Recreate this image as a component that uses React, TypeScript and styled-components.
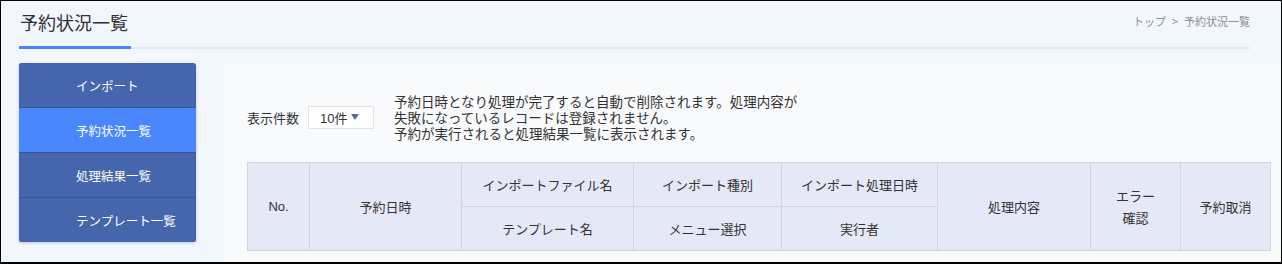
import styled, { createGlobalStyle } from 'styled-components'

const GlobalStyle = createGlobalStyle`
  html, body {
    margin: 0;
    padding: 0;
    background: #ffffff;
  }
  body {
    font-family: 'Noto Sans CJK JP', 'Liberation Sans', sans-serif;
    color: #333;
  }
`

const Frame = styled.div`
  box-sizing: border-box;
  width: 1282px;
  height: 264px;
  overflow: hidden;
  border: 1px solid #000;
  border-bottom-width: 2px;
  background: #f2f6fd;
`

const Header = styled.header`
  display: flex;
  justify-content: space-between;
  align-items: flex-start;
  margin: 0 31px 0 18px;
  border-bottom: 2px solid #e3e9f3;
`

const Title = styled.h1`
  margin: 0 0 -2px;
  padding: 8px 3px 11px 1px;
  font-size: 18px;
  line-height: 26px;
  font-weight: 400;
  color: #2f3033;
  border-bottom: 3px solid #4a86f6;
`

const Breadcrumb = styled.nav`
  padding-top: 13px;
  font-size: 11px;
  line-height: 14px;
  color: #8c9099;

  span {
    margin: 0 6px;
  }
`

const Body = styled.div`
  display: flex;
  align-items: flex-start;
  margin-top: 14px;
  padding-left: 18px;
`

const Sidebar = styled.ul`
  list-style: none;
  margin: 0;
  padding: 0;
  width: 177px;
  flex: none;
  border-radius: 2px 3px 2px 2px;
  overflow: hidden;
  box-shadow: 0 1px 3px rgba(40, 60, 110, 0.25);
`

const NavItem = styled.li<{ $active?: boolean }>`
  height: 44px;
  padding-left: 57px;
  display: flex;
  align-items: center;
  font-size: 12.5px;
  color: #ffffff;
  background: ${({ $active }) => ($active ? '#4a87fc' : '#4566ad')};
  & + & {
    border-top: 1px solid #3a5591;
  }
`

const Card = styled.main`
  flex: 1;
  margin: 1px 0 0 28px;
  height: 210px;
  padding: 29px 11px 0 23px;
  background: #f9fafc;
`

const Controls = styled.div`
  display: flex;
  align-items: center;
`

const Label = styled.span`
  font-size: 13px;
  color: #333;
`

const Select = styled.div`
  box-sizing: border-box;
  display: flex;
  align-items: center;
  justify-content: space-between;
  width: 66px;
  height: 23px;
  margin-left: 9px;
  padding: 0 14px 0 11px;
  background: #fff;
  border: 1px solid #e1e4ea;
  font-size: 13px;
  color: #333;
  font-family: 'Liberation Sans', 'Noto Sans CJK JP', sans-serif;
`

const Caret = styled.span`
  width: 0;
  height: 0;
  border-left: 4px solid transparent;
  border-right: 4px solid transparent;
  border-top: 6px solid #5b6a9e;
`

const Note = styled.p`
  margin: 0 0 0 20px;
  font-size: 13.5px;
  line-height: 16px;
  color: #333;
`

const Table = styled.table`
  margin-top: 21px;
  width: 1023px;
  border-collapse: collapse;
  table-layout: fixed;

  th {
    height: 43px;
    padding: 0;
    background: #e5e8f6;
    border: 1px solid #d3d6df;
    font-size: 13px;
    font-weight: 400;
    line-height: 22px;
    color: #333;
    text-align: center;
    vertical-align: middle;
  }
`

const No = styled.span`
  font-family: 'Liberation Sans', sans-serif;
`

const columns = [62, 152, 172, 148, 156, 153, 90, 90]

const navItems = ['インポート', '予約状況一覧', '処理結果一覧', 'テンプレート一覧']

const App = () => {
  return (
    <Frame>
      <GlobalStyle />
      <Header>
        <Title>予約状況一覧</Title>
        <Breadcrumb>
          トップ<span>&gt;</span>予約状況一覧
        </Breadcrumb>
      </Header>
      <Body>
        <Sidebar>
          {navItems.map((item) => (
            <NavItem key={item} $active={item === '予約状況一覧'}>
              {item}
            </NavItem>
          ))}
        </Sidebar>
        <Card>
          <Controls>
            <Label>表示件数</Label>
            <Select>
              10件
              <Caret />
            </Select>
            <Note>
              予約日時となり処理が完了すると自動で削除されます。処理内容が
              <br />
              失敗になっているレコードは登録されません。
              <br />
              予約が実行されると処理結果一覧に表示されます。
            </Note>
          </Controls>
          <Table>
            <colgroup>
              {columns.map((w, i) => (
                <col key={i} style={{ width: w }} />
              ))}
            </colgroup>
            <thead>
              <tr>
                <th rowSpan={2}>
                  <No>No.</No>
                </th>
                <th rowSpan={2}>予約日時</th>
                <th>インポートファイル名</th>
                <th>インポート種別</th>
                <th>インポート処理日時</th>
                <th rowSpan={2}>処理内容</th>
                <th rowSpan={2}>
                  エラー
                  <br />
                  確認
                </th>
                <th rowSpan={2}>予約取消</th>
              </tr>
              <tr>
                <th>テンプレート名</th>
                <th>メニュー選択</th>
                <th>実行者</th>
              </tr>
            </thead>
          </Table>
        </Card>
      </Body>
    </Frame>
  )
}

export default App
